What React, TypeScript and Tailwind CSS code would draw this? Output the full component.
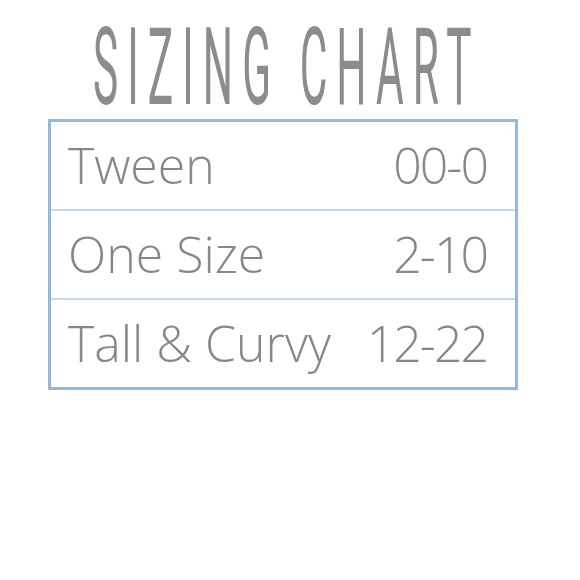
import React from "react";

const rows = [
  { name: "Tween", size: "00-0" },
  { name: "One Size", size: "2-10" },
  { name: "Tall & Curvy", size: "12-22" },
];

export default function App() {
  return (
    <div className="w-[580px] h-[580px] bg-white flex flex-col">
      <div className="h-[119px] pl-[93px] pt-[13px]">
        <span
          className="inline-block w-[380px] origin-left scale-x-[0.393] text-[108px] leading-none tracking-[23px] text-[#8c8c8c] whitespace-nowrap"
          style={{ fontFamily: "Roboto, sans-serif" }}
        >
          SIZING CHART
        </span>
      </div>
      <div className="ml-[48px] w-[470px] h-[271px] border-[3px] border-[#94b7dc] flex flex-col">
        {rows.map((r, i) => (
          <div
            key={r.name}
            className={
              "flex-1 flex items-center justify-between pl-[17px] pr-[28px] text-[50px] font-light text-[#878787] " +
              (i > 0 ? "border-t-[2px] border-[#c5d8ec]" : "")
            }
            style={{ fontFamily: "'Open Sans', sans-serif" }}
          >
            <span>{r.name}</span>
            <span className="tracking-[-2px]">{r.size}</span>
          </div>
        ))}
      </div>
    </div>
  );
}
